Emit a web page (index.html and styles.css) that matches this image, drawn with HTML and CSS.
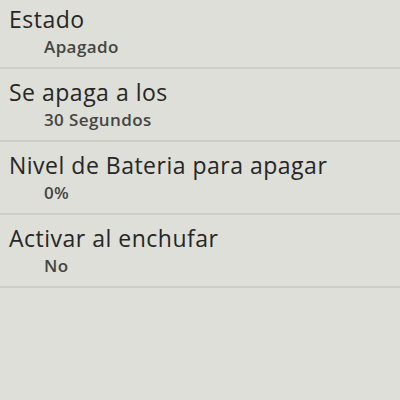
FILE: index.html
```html
<!DOCTYPE html>
<html lang="es">
<head>
    <meta charset="UTF-8">
    <title>Ajustes</title>
    <link rel="stylesheet" href="styles.css">
</head>
<body>
    <ul class="prefs">
        <li class="pref">
            <div class="pref-title">Estado</div>
            <div class="pref-summary">Apagado</div>
        </li>
        <li class="pref">
            <div class="pref-title">Se apaga a los</div>
            <div class="pref-summary">30 Segundos</div>
        </li>
        <li class="pref">
            <div class="pref-title">Nivel de Bateria para apagar</div>
            <div class="pref-summary">0%</div>
        </li>
        <li class="pref">
            <div class="pref-title">Activar al enchufar</div>
            <div class="pref-summary">No</div>
        </li>
    </ul>
</body>
</html>
```

FILE: styles.css
```css
body {
    margin: 0;
    height: 400px;
    background-color: #dedfd8;
    font-family: "Open Sans", "Noto Sans", sans-serif;
    overflow: hidden;
}

.prefs {
    list-style: none;
    margin: -4px 0 0;
    padding: 0;
}

.pref {
    height: 71px;
    padding: 0 0 0 9px;
    border-bottom: 2px solid #cdcec7;
    box-sizing: content-box;
}

.pref-title {
    font-size: 23px;
    font-weight: 500;
    line-height: 28px;
    letter-spacing: 0.5px;
    padding-top: 9px;
    color: #262626;
}

.pref-summary {
    font-size: 17px;
    font-weight: 600;
    line-height: 22px;
    letter-spacing: 0.4px;
    padding: 3px 0 0 35px;
    color: #454545;
}
```
